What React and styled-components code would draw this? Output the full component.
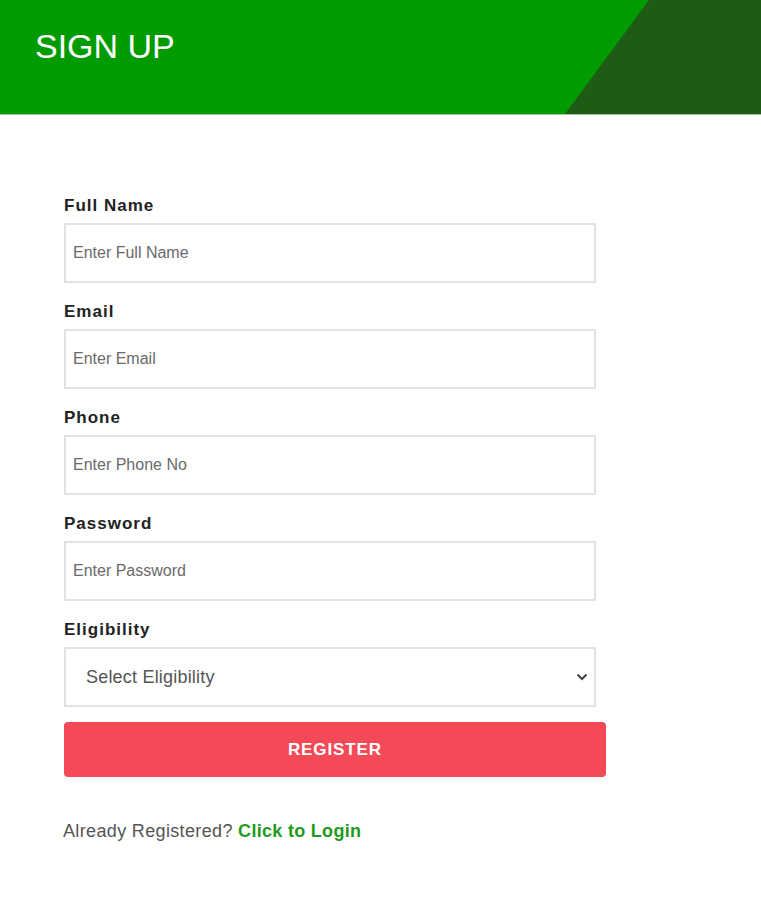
import React from 'react';
import styled, { createGlobalStyle } from 'styled-components';

const GlobalStyle = createGlobalStyle`
  body {
    margin: 0;
    background: #ffffff;
    font-family: "Liberation Sans", Arial, sans-serif;
  }
`;

const Page = styled.div`
  width: 761px;
  min-height: 900px;
  background: #ffffff;
`;

const Header = styled.header`
  position: relative;
  box-sizing: border-box;
  height: 115px;
  display: flex;
  align-items: center;
  padding-left: 35px;
  background: #009b00;
  border-bottom: 1px solid #9fc79a;
  overflow: hidden;

  &::after {
    content: '';
    position: absolute;
    top: 0;
    right: 0;
    bottom: 0;
    width: 196px;
    background: #1e5c15;
    clip-path: polygon(84px 0, 100% 0, 100% 100%, 0 100%);
  }
`;

const Title = styled.h1`
  margin: 0 0 22px 0;
  color: #ffffff;
  font-size: 34px;
  font-weight: 400;
`;

const Form = styled.form`
  display: flex;
  flex-direction: column;
  padding: 81px 0 0 64px;
`;

const Field = styled.div`
  display: flex;
  flex-direction: column;
  margin-bottom: 19px;
`;

const Label = styled.label`
  font-size: 17px;
  line-height: 20px;
  font-weight: 700;
  letter-spacing: 1px;
  color: #222222;
  margin-bottom: 7px;
`;

const Input = styled.input`
  box-sizing: border-box;
  width: 532px;
  height: 60px;
  padding: 0 7px;
  border: 2px solid #e2e2e2;
  border-radius: 0;
  font-family: "Liberation Sans", Arial, sans-serif;
  font-size: 16px;
  color: #333;
  outline: none;

  &::placeholder {
    color: #6a6a6a;
  }
`;

const SelectWrap = styled.div`
  position: relative;
  width: 532px;
`;

const Select = styled.select`
  box-sizing: border-box;
  width: 532px;
  height: 60px;
  padding: 0 20px;
  border: 2px solid #e2e2e2;
  border-radius: 0;
  background: #ffffff;
  appearance: none;
  font-family: "Liberation Sans", Arial, sans-serif;
  font-size: 18px;
  letter-spacing: 0.2px;
  color: #555555;
  outline: none;
`;

const Chevron = styled.svg`
  position: absolute;
  right: 8px;
  top: 26px;
  pointer-events: none;
`;

const Button = styled.button`
  box-sizing: border-box;
  width: 542px;
  height: 55px;
  margin-top: -4px;
  border: none;
  border-radius: 4px;
  background: #f44956;
  color: #ffffff;
  font-family: "Liberation Sans", Arial, sans-serif;
  font-size: 17px;
  font-weight: 700;
  letter-spacing: 0.9px;
  cursor: pointer;
`;

const Footer = styled.p`
  margin: 43px 0 0 -1px;
  font-size: 18px;
  line-height: 22px;
  letter-spacing: 0.35px;
  color: #555555;
`;

const LoginLink = styled.a`
  color: #1e9a1e;
  font-weight: 700;
  letter-spacing: 0.3px;
  text-decoration: none;
`;

const fields = [
  { label: 'Full Name', placeholder: 'Enter Full Name', type: 'text' },
  { label: 'Email', placeholder: 'Enter Email', type: 'email' },
  { label: 'Phone', placeholder: 'Enter Phone No', type: 'tel' },
  { label: 'Password', placeholder: 'Enter Password', type: 'password' },
];

const App = () => {
  return (
    <Page>
      <GlobalStyle />
      <Header>
        <Title>SIGN UP</Title>
      </Header>
      <Form onSubmit={(e) => e.preventDefault()}>
        {fields.map((f) => (
          <Field key={f.label}>
            <Label>{f.label}</Label>
            <Input type={f.type} placeholder={f.placeholder} />
          </Field>
        ))}
        <Field>
          <Label>Eligibility</Label>
          <SelectWrap>
            <Select defaultValue="">
              <option value="" disabled>
                Select Eligibility
              </option>
              <option>Student</option>
              <option>Graduate</option>
            </Select>
            <Chevron width="12" height="8" viewBox="0 0 12 8">
              <path d="M1.5 1.5 L6 6 L10.5 1.5" fill="none" stroke="#444" strokeWidth="2" />
            </Chevron>
          </SelectWrap>
        </Field>
        <Button type="submit">REGISTER</Button>
        <Footer>
          Already Registered? <LoginLink href="#">Click to Login</LoginLink>
        </Footer>
      </Form>
    </Page>
  );
};

export default App;
